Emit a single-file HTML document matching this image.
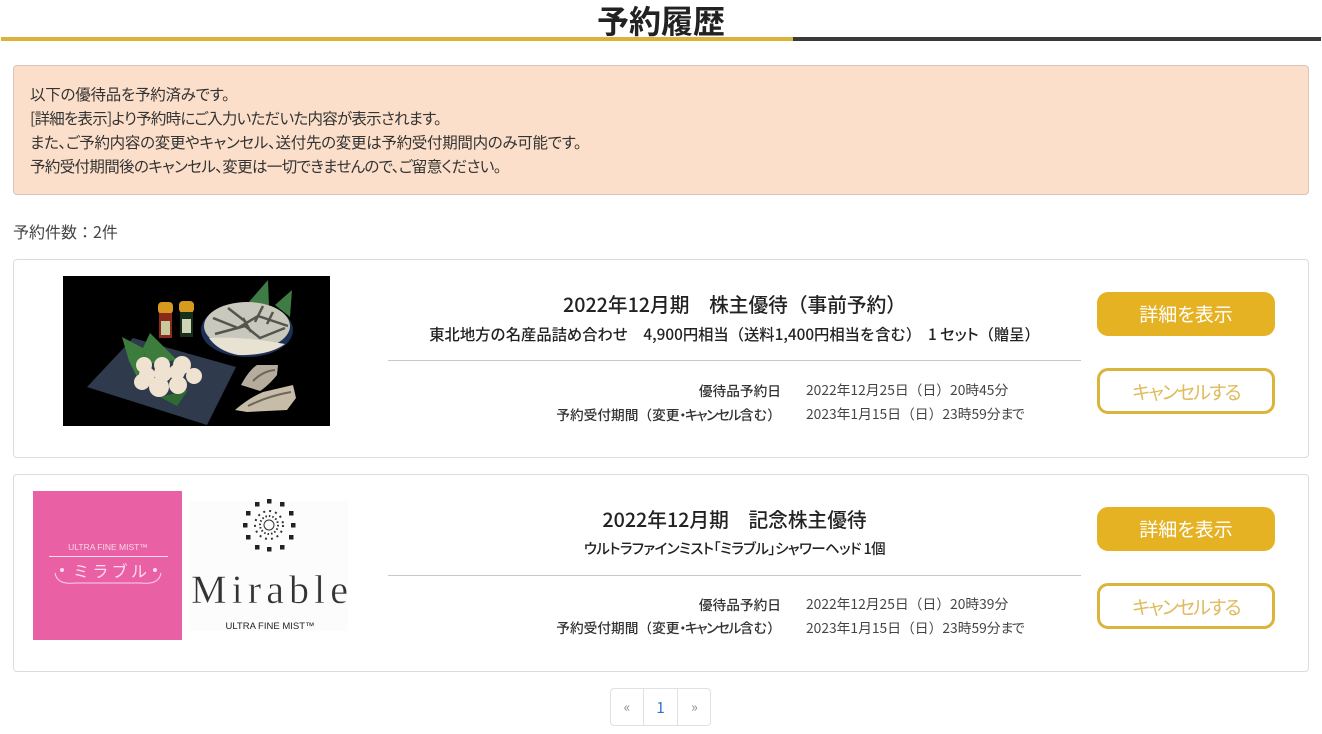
<!DOCTYPE html>
<html lang="ja"><head><meta charset="utf-8"><title>予約履歴</title>
<style>
*{box-sizing:border-box}
html,body{margin:0;padding:0;background:#fff}
body{width:1322px;height:734px;position:relative;overflow:hidden;font-family:"Noto Sans CJK JP","Liberation Sans",sans-serif;color:#333}
.a{position:absolute;white-space:nowrap}
.p{font-feature-settings:"palt"}
.card{position:absolute;left:13px;width:1296px;height:199px;border:1px solid #dcdcdc;border-radius:4px;background:#fff}
.c{position:absolute;left:388px;width:693px;text-align:center;white-space:nowrap;color:#222}
.t{font-size:19.7px;font-weight:500;line-height:26px}
.s{font-size:14.5px;font-weight:500;line-height:22px}
.hr{position:absolute;left:388px;width:693px;height:1px;background:#c8c8c8}
.l{position:absolute;right:541px;font-size:13.7px;font-weight:500;line-height:20px;white-space:nowrap;color:#333}
.v{position:absolute;left:806px;font-size:13.8px;line-height:20px;white-space:nowrap;color:#444}
.b1,.b2{position:absolute;left:1097px;width:178px;border-radius:11px;text-align:center;white-space:nowrap;font-size:19px;font-feature-settings:"palt"}
.b1{height:44px;line-height:43px;background:#e5b224;color:#fff}
.b2{height:46px;line-height:42px;background:#fff;border:3px solid #dcb43c;color:#e0bb5c;letter-spacing:-1.85px}
.ln{display:block;height:24px}
</style></head><body>
<div class="a" style="left:0;right:0;top:0;text-align:center;font-size:32px;font-weight:700;line-height:40px;color:#222">予約履歴</div>
<div class="a" style="left:1px;top:37px;width:792px;height:4px;background:#dcb33a"></div>
<div class="a" style="left:793px;top:37px;width:528px;height:4px;background:#3a3a3c"></div>

<div class="a" style="left:13px;top:65px;width:1296px;height:130px;background:#fbdfca;border:1px solid #d9c6b8;border-radius:4px"></div>
<div class="a p" style="left:30px;top:82px;font-size:15.5px;line-height:24px;color:#333">
<span class="ln" style="letter-spacing:-.25px">以下の優待品を予約済みです。</span>
<span class="ln" style="letter-spacing:-.75px">[詳細を表示]より予約時にご入力いただいた内容が表示されます。</span>
<span class="ln" style="letter-spacing:-.3px">また、ご予約内容の変更やキャンセル、送付先の変更は予約受付期間内のみ可能です。</span>
<span class="ln" style="letter-spacing:-.65px">予約受付期間後のキャンセル、変更は一切できませんので、ご留意ください。</span>
</div>
<div class="a" style="left:13px;top:220px;font-size:16px;line-height:22px;color:#444">予約件数：2件</div>

<div class="card" style="top:259px"></div>
<svg class="a" style="left:63px;top:276px" width="267" height="150" viewBox="0 0 267 150">
<rect width="267" height="150" fill="#000"/>
<path d="M185 27 L205 4 L206 30Z M212 29 L229 14 L227 41Z" fill="#3f7c45"/>
<ellipse cx="184" cy="54" rx="46" ry="27" fill="#1d2f55"/>
<ellipse cx="184" cy="50" rx="43" ry="24" fill="#c9c8bd"/>
<path d="M150 42l25 10 20-12 30 10M152 58l30-8 15 12 25-10M165 32l18 14M200 30l-8 16M180 42l8 14M210 36l-6 12" stroke="#55554f" stroke-width="2.5" fill="none"/>
<path d="M146 62 Q180 60 222 68 Q205 80 175 79 Q155 75 146 62Z" fill="#e7e2d2"/>
<rect x="95" y="26" width="15" height="12" rx="4" fill="#d69a1f"/><rect x="96" y="37" width="13" height="25" fill="#8b2a18"/><rect x="98" y="45" width="9" height="14" fill="#c9c9a0"/>
<rect x="116" y="25" width="15" height="12" rx="4" fill="#d69a1f"/><rect x="117" y="36" width="13" height="25" fill="#17301c"/><rect x="119" y="43" width="9" height="14" fill="#cfd6b6"/>
<path d="M70 62 L173 91 L144 149 L24 111Z" fill="#2f3a4c"/>
<path d="M59 61 L66 85 L74 101 L84 90 L80 72Z M87 57 L80 72 L84 88 L114 84Z" fill="#3c7d3d"/>
<path d="M97 121 L125 114 L114 130Z" fill="#2f6a32"/>
<g fill="#efe2d0"><circle cx="81" cy="89" r="8"/><circle cx="99" cy="89" r="8"/><circle cx="119" cy="89" r="9"/><circle cx="131" cy="100" r="8"/><circle cx="114" cy="96" r="8"/><circle cx="100" cy="97" r="9"/><circle cx="84" cy="99" r="8"/><circle cx="79" cy="106" r="8"/><circle cx="96" cy="111" r="10"/><circle cx="115" cy="109" r="9"/></g>
<path d="M178 109 Q186 94 194 89 L215 89 L214 99 Q205 110 197 115Z" fill="#b5ac9d"/>
<path d="M172 134 Q186 122 200 116 L230 109 L233 122 L224 134 L184 136Z" fill="#c6bca8"/>
<path d="M185 130 Q205 120 228 116M190 105 Q200 95 212 94" stroke="#6d6558" stroke-width="2" fill="none"/>
</svg>
<div class="c t" style="top:291px">2022年12月期　株主優待（事前予約）</div>
<div class="c s" style="top:323px;font-size:15.3px">東北地方の名産品詰め合わせ　4,900円相当（送料1,400円相当を含む）&nbsp;&nbsp;1 <span class="p">セット</span>（贈呈）</div>
<div class="hr" style="top:360px"></div>
<div class="l" style="top:380px">優待品予約日</div>
<div class="v" style="top:379px">2022年12月25日（日）20時45分</div>
<div class="l" style="top:404px">予約受付期間（変更<span class="p" style="letter-spacing:-1.4px">・キャンセル</span>含む）</div>
<div class="v" style="top:403px">2023年1月15日（日）23時59分<span class="p" style="letter-spacing:-1.5px">まで</span></div>
<div class="b1" style="top:292px">詳細を表示</div>
<div class="b2" style="top:368px">キャンセルする</div>

<div class="card" style="top:474px;height:198px"></div>
<svg class="a" style="left:33px;top:491px" width="320" height="150" viewBox="0 0 320 150">
<rect width="149" height="149" fill="#ea60a5"/>
<rect x="157" y="10" width="158" height="130" fill="#fcfcfc"/>
<text x="75" y="59" text-anchor="middle" font-family="Liberation Sans" font-size="8.5" fill="#fbd8e8">ULTRA FINE MIST™</text>
<rect x="16" y="65" width="119" height="1" fill="#fde"/>
<text x="40" y="86" textLength="74" lengthAdjust="spacing" font-family="Noto Sans CJK JP" font-size="16" fill="#fde">ミラブル</text>
<path d="M22 82 Q24 94 42 92 L108 92 Q126 94 128 82" stroke="#fbd0e4" fill="none"/>
<circle cx="29" cy="79" r="2" fill="#fde"/><circle cx="122" cy="79" r="2" fill="#fde"/>
<g fill="#222" transform="translate(-2,-2)"><rect x="236" y="10" width="4.5" height="4.5"/><rect x="224" y="13" width="4.5" height="4.5"/><rect x="249" y="13" width="4.5" height="4.5"/><rect x="215" y="22" width="4.5" height="4.5"/><rect x="258" y="22" width="4.5" height="4.5"/><rect x="212" y="34" width="4.5" height="4.5"/><rect x="260" y="34" width="4.5" height="4.5"/><rect x="215" y="46" width="4.5" height="4.5"/><rect x="258" y="46" width="4.5" height="4.5"/><rect x="224" y="56" width="4.5" height="4.5"/><rect x="249" y="56" width="4.5" height="4.5"/><rect x="236" y="58" width="4.5" height="4.5"/></g>
<circle cx="236" cy="34" r="5" fill="none" stroke="#333"/>
<circle cx="236" cy="34" r="9" fill="none" stroke="#333" stroke-width="2" stroke-dasharray="1.5 2"/>
<circle cx="236" cy="34" r="14" fill="none" stroke="#333" stroke-width="2" stroke-dasharray="2 4"/>
<text x="158" y="112" font-family="Liberation Serif" font-size="40" textLength="157" lengthAdjust="spacing" fill="#333" stroke="#fcfcfc" stroke-width=".45" paint-order="fill stroke">Mirable</text>
<text x="237" y="138" text-anchor="middle" font-family="Liberation Sans" font-size="9.5" fill="#222">ULTRA FINE MIST™</text>
</svg>
<div class="c t" style="top:506px">2022年12月期　記念株主優待</div>
<div class="c s p" style="top:538px;letter-spacing:-.6px">ウルトラファインミスト「ミラブル」シャワーヘッド 1個</div>
<div class="hr" style="top:575px"></div>
<div class="l" style="top:594px">優待品予約日</div>
<div class="v" style="top:593px">2022年12月25日（日）20時39分</div>
<div class="l" style="top:617px">予約受付期間（変更<span class="p" style="letter-spacing:-1.4px">・キャンセル</span>含む）</div>
<div class="v" style="top:617px">2023年1月15日（日）23時59分<span class="p" style="letter-spacing:-1.5px">まで</span></div>
<div class="b1" style="top:507px">詳細を表示</div>
<div class="b2" style="top:583px">キャンセルする</div>

<div class="a" style="left:610px;top:688px;width:101px;height:38px;border:1px solid #dee2e6;border-radius:4px;font-size:14px;line-height:37px;text-align:center">
<span class="a" style="left:0;width:32px;color:#8a8f94">«</span>
<span class="a" style="left:32px;width:1px;height:36px;background:#dee2e6"></span>
<span class="a" style="left:33px;width:33px;color:#2c6fd0;font-size:15px">1</span>
<span class="a" style="left:66px;width:1px;height:36px;background:#dee2e6"></span>
<span class="a" style="left:67px;width:33px;color:#8a8f94">»</span>
</div>
</body></html>
